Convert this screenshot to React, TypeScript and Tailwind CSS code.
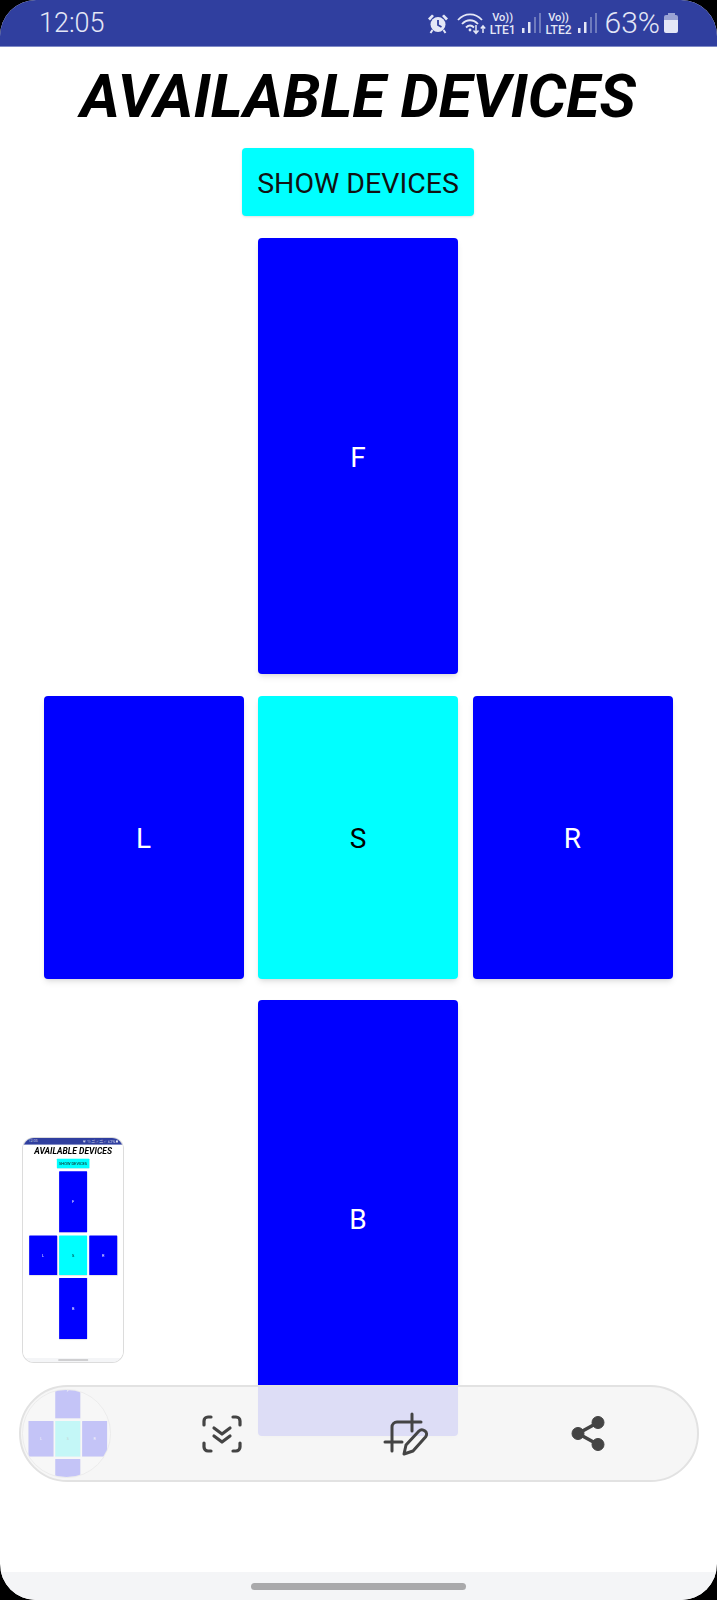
function AlarmIcon() {
  return (
    <svg width="22" height="21" viewBox="0 0 22 21" className="text-[#e4e7f6]">
      <circle cx="11" cy="11.5" r="7.5" fill="currentColor" />
      <path d="M11 7v5l3.5 2" fill="none" stroke="#303f9f" strokeWidth="1.8" />
      <path d="M1 5.5 5 1.5 7 3 3 7.5zM21 5.5 17 1.5 15 3 19 7.5z" fill="currentColor" />
      <path d="M5.5 17 3.5 20M16.5 17l2 3" stroke="currentColor" strokeWidth="2" />
    </svg>
  );
}

function WifiIcon() {
  return (
    <svg width="30" height="23" viewBox="0 0 30 23" fill="none" stroke="#e4e7f6" strokeWidth="1.8">
      <path d="M1 8c7-7.500 17-7.500 24 0" />
      <path d="M5 12c4.800-5 11.200-5 16 0" />
      <path d="M9 15.500c2.500-2.500 5.500-2.500 8 0" />
      <circle cx="13" cy="18" r="1.400" fill="#e4e7f6" stroke="none" />
      <path d="M19 13v8M16.500 18.500l2.500 2.800 2.500-2.800" strokeWidth="1.500" />
      <path d="M26 21v-7M23.800 16.500l2.200-2.500 2.200 2.500" strokeWidth="1.500" />
    </svg>
  );
}

function SignalIcon() {
  return (
    <svg width="19" height="20" viewBox="0 0 19 20">
      <rect x="0" y="15" width="2.500" height="5" fill="#e4e7f6" />
      <rect x="6" y="9" width="2.500" height="11" fill="#e4e7f6" />
      <rect x="12" y="4" width="2" height="16" fill="#6f7bbd" />
      <rect x="17" y="0" width="2" height="20" fill="#6f7bbd" />
    </svg>
  );
}

function LteBlock({ label }: { label: string }) {
  return (
    <div className="flex flex-col items-center pt-[2px] text-[#e4e7f6] font-['Roboto',sans-serif] font-medium">
      <span className="text-[11px] leading-[10px]">{"Vo))"}</span>
      <span className="text-[12px] leading-[12px] mt-[1px]">{label}</span>
    </div>
  );
}

function StatusBar() {
  return (
    <div className="h-[47px] shrink-0 bg-[#303f9f] border-b border-[#7f8ac6] flex items-center justify-between pl-[39px] pr-[39px] text-[#e4e7f6] font-['Roboto',sans-serif]">
      <span className="text-[27px] font-light leading-none">12:05</span>
      <div className="flex items-center">
        <AlarmIcon />
        <div className="ml-[8px]">
          <WifiIcon />
        </div>
        <div className="ml-[3px]">
          <LteBlock label="LTE1" />
        </div>
        <div className="ml-[6px]">
          <SignalIcon />
        </div>
        <div className="ml-[5px]">
          <LteBlock label="LTE2" />
        </div>
        <div className="ml-[6px]">
          <SignalIcon />
        </div>
        <span className="ml-[8px] text-[30px] font-light leading-none">63%</span>
        <div className="ml-[4px] w-[14px] h-[20px] flex flex-col items-center">
          <div className="w-[7px] h-[2px] bg-[#9aa3d4]" />
          <div className="w-[14px] h-[18px] rounded-[2px] bg-[#e4e7f6] border-t-[5px] border-[#9aa3d4]" />
        </div>
      </div>
    </div>
  );
}

function Card({ label, tall, cyan }: { label: string; tall?: boolean; cyan?: boolean }) {
  return (
    <div
      className={`w-[200px] ${tall ? "h-[436px]" : "h-[283px]"} ${cyan ? "bg-[#00ffff] text-black" : "bg-[#0000ff] text-white"} rounded-[4px] shadow-md flex items-center justify-center pt-[3px] text-[28px]`}
    >
      {label}
    </div>
  );
}

function Screen() {
  return (
    <div className="w-[717px] h-[1600px] bg-white rounded-[36px] overflow-hidden flex flex-col font-['Roboto',sans-serif]">
      <StatusBar />
      <div className="flex-1 flex flex-col items-center pr-[1px]">
        <h1 className="mt-[15px] h-[70px] text-[60.800px] leading-[70px] font-bold italic text-black whitespace-nowrap">
          AVAILABLE DEVICES
        </h1>
        <button className="mt-[16px] w-[232px] h-[68px] pt-[4px] bg-[#00ffff] rounded-[4px] shadow-sm text-[28.500px] text-[#111] whitespace-nowrap">
          SHOW DEVICES
        </button>
        <div className="mt-[22px]">
          <Card label="F" tall />
        </div>
        <div className="mt-[22px] flex gap-[14.500px]">
          <Card label="L" />
          <Card label="S" cyan />
          <Card label="R" />
        </div>
        <div className="mt-[21px]">
          <Card label="B" tall />
        </div>
      </div>
      <div className="h-[28px] shrink-0 bg-[#f4f5f7] flex items-center justify-center">
        <div className="w-[215px] h-[7px] rounded-full bg-[#a9a9ab]" />
      </div>
    </div>
  );
}

function ScanIcon() {
  return (
    <svg width="40" height="38" viewBox="0 0 40 38" fill="none" stroke="#444" strokeWidth="3.200" strokeLinecap="round" strokeLinejoin="round">
      <path d="M2 10V6a4 4 0 0 1 4-4h3M31 2h3a4 4 0 0 1 4 4v4M2 28v4a4 4 0 0 0 4 4h3M38 28v4a4 4 0 0 1-4 4h-3" />
      <path d="M12 13l8 6 8-6M12 21l8 6 8-6" />
    </svg>
  );
}

function CropEditIcon() {
  return (
    <svg width="46" height="44" viewBox="0 0 46 44" fill="none" stroke="#444" strokeWidth="3" strokeLinecap="round" strokeLinejoin="round">
      <path d="M29 2v17M38 10H14a5 5 0 0 0-5 5v24" />
      <path d="M2 30h17" />
      <path d="M21 42l2-9 13-14c1.500-1.500 4-1.500 6 0s2 4 .500 6L30 39z" />
    </svg>
  );
}

function ShareIcon() {
  return (
    <svg width="34" height="35" viewBox="0 0 34 35" fill="#444" stroke="#444">
      <circle cx="27" cy="6.500" r="6" />
      <circle cx="7" cy="17.500" r="6" />
      <circle cx="27" cy="28.500" r="6" />
      <path d="M27 6.500 7 17.500l20 11" fill="none" strokeWidth="3.500" />
    </svg>
  );
}

function Toolbar() {
  return (
    <div className="absolute left-[19px] top-[1385px] w-[680px] h-[97px] rounded-full bg-[#f5f5f5]/90 border-2 border-[#e2e2e2] flex items-center">
      <div className="relative ml-[1px] w-[89px] h-[89px] shrink-0 rounded-full overflow-hidden border border-[#ececec]">
        <div className="absolute left-0 top-[-56px] w-[717px] h-[1600px] origin-top-left scale-[0.125] opacity-20">
          <Screen />
        </div>
      </div>
      <div className="ml-[19px] w-[183px] flex justify-center">
        <ScanIcon />
      </div>
      <div className="w-[183px] pl-[2px] flex justify-center">
        <CropEditIcon />
      </div>
      <div className="w-[183px] flex justify-center">
        <ShareIcon />
      </div>
    </div>
  );
}

function Thumbnail() {
  return (
    <div className="absolute left-[23px] top-[1138px] w-[100px] h-[224px] rounded-[11px] overflow-hidden shadow-[0_0_0_1px_#dcdcdc]">
      <div className="w-[717px] h-[1600px] origin-top-left scale-[0.14] blur-[2px]">
        <Screen />
      </div>
    </div>
  );
}

export default function App() {
  return (
    <div className="relative w-[717px] h-[1600px] bg-black overflow-hidden">
      <Screen />
      <Thumbnail />
      <Toolbar />
    </div>
  );
}
